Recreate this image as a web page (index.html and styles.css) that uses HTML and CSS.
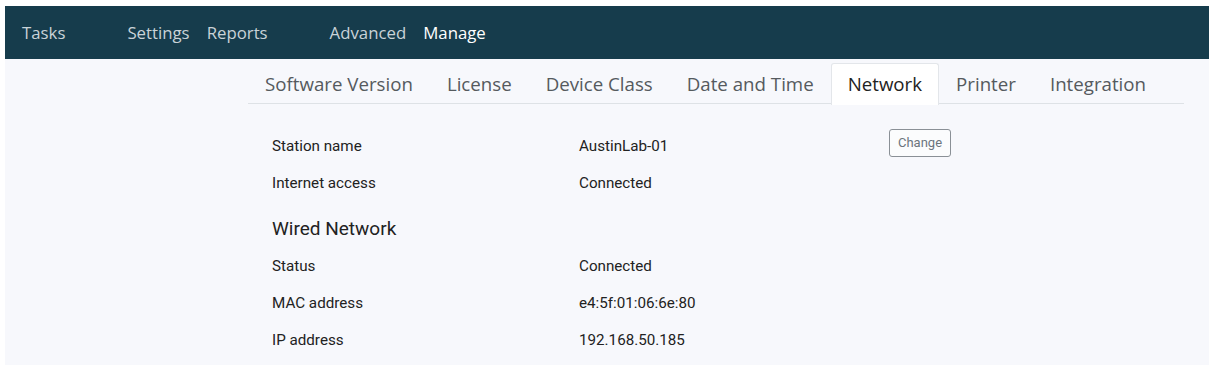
FILE: index.html
```html
<!DOCTYPE html>
<html>
<head>
<meta charset="utf-8">
<link rel="stylesheet" href="styles.css">
</head>
<body>
<div class="frame">
  <nav class="topnav">
    <a class="nav-item first">Tasks</a>
    <a class="nav-item">Settings</a>
    <a class="nav-item gap">Reports</a>
    <a class="nav-item">Advanced</a>
    <a class="nav-item active">Manage</a>
  </nav>
  <main class="main">
    <ul class="tabs">
      <li class="tab">Software Version</li>
      <li class="tab">License</li>
      <li class="tab">Device Class</li>
      <li class="tab">Date and Time</li>
      <li class="tab active">Network</li>
      <li class="tab">Printer</li>
      <li class="tab">Integration</li>
    </ul>
    <section class="panel">
      <div class="row">
        <div class="label">Station name</div>
        <div class="value">AustinLab-01</div>
        <button class="btn">Change</button>
      </div>
      <div class="row">
        <div class="label">Internet access</div>
        <div class="value">Connected</div>
      </div>
      <h2 class="heading">Wired Network</h2>
      <div class="row">
        <div class="label">Status</div>
        <div class="value">Connected</div>
      </div>
      <div class="row">
        <div class="label">MAC address</div>
        <div class="value">e4:5f:01:06:6e:80</div>
      </div>
      <div class="row">
        <div class="label">IP address</div>
        <div class="value">192.168.50.185</div>
      </div>
    </section>
  </main>
</div>
</body>
</html>
```
FILE: styles.css
```css
html, body {
  margin: 0;
  padding: 0;
  background: #ffffff;
}
body {
  padding: 6px 5px 6px 5px;
  font-family: "Open Sans", "Noto Sans", sans-serif;
}
.frame {
  background: #f7f8fc;
  height: 359px;
}
.topnav {
  background: #163c4c;
  height: 53px;
  display: flex;
  align-items: center;
  padding-left: 17px;
}
.nav-item {
  color: #c9d3d8;
  font-size: 16.8px;
  margin-right: 17px;
}
.nav-item.first {
  margin-right: 62px;
}
.nav-item.gap {
  margin-right: 62px;
}
.nav-item.active {
  color: #ffffff;
}
.main {
  padding-left: 243px;
  padding-right: 25px;
}
.tabs {
  list-style: none;
  margin: 4px 0 0 0;
  padding: 0;
  display: flex;
  border-bottom: 1px solid #dee2e6;
  height: 40px;
}
.tab {
  font-size: 18.7px;
  color: #555a5e;
  padding: 0 16px;
  line-height: 40px;
  border: 1px solid transparent;
  border-bottom: none;
  border-radius: 3px 3px 0 0;
}
.tab.active {
  background: #ffffff;
  border-color: #e3e6ea;
  color: #222222;
  height: 41px;
}
.panel {
  padding: 23px 0 0 24px;
  font-family: Roboto, "Liberation Sans", sans-serif;
  font-size: 15.2px;
  color: #222;
}
.row {
  display: flex;
  align-items: center;
  height: 37px;
}
.label {
  width: 307px;
}
.value {
  width: 310px;
}
.btn {
  font-family: Roboto, "Liberation Sans", sans-serif;
  font-size: 13px;
  color: #6c757d;
  background: #fbfcfd;
  border: 1px solid #8a9096;
  border-radius: 3px;
  height: 28px;
  width: 62px;
  padding: 0;
  margin-top: -6px;
}
.heading {
  margin: 0;
  font-weight: normal;
  font-size: 19px;
  height: 46px;
  padding-top: 9px;
  box-sizing: border-box;
  line-height: 37px;
}
```
